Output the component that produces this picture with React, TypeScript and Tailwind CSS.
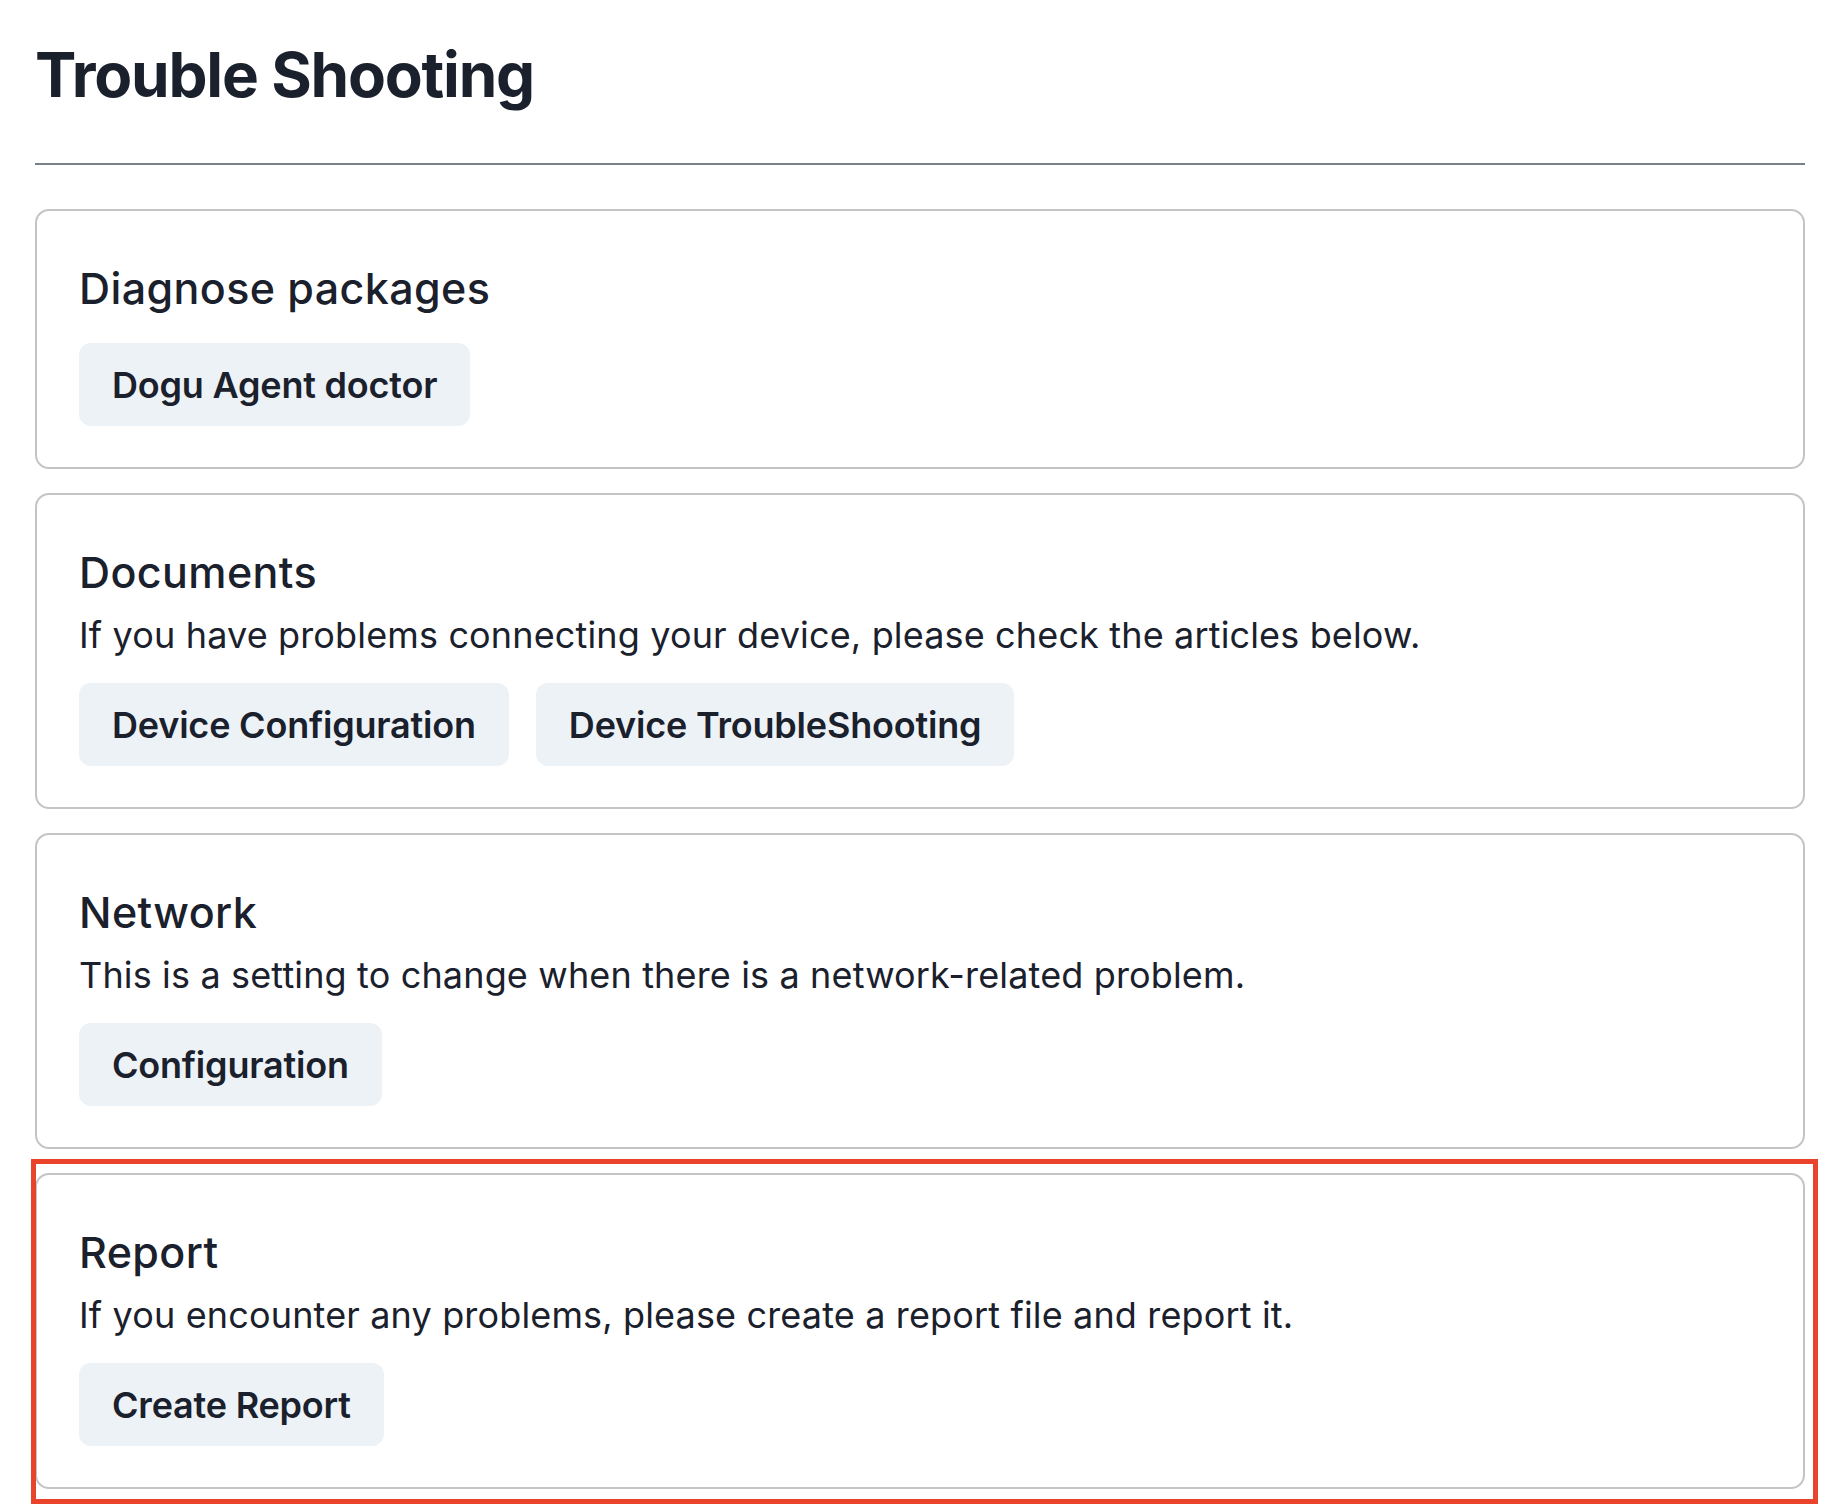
import React from "react";

const font = { fontFamily: "Inter, 'Noto Sans', sans-serif" };

function Btn({ children }: { children: React.ReactNode }) {
  return (
    <button className="h-[83px] px-[33px] rounded-[12px] bg-[#edf2f7] text-[#1a202c] text-[36px] tracking-[-0.2px] font-semibold leading-none">
      {children}
    </button>
  );
}

function Card({
  title,
  desc,
  children,
}: {
  title: string;
  desc?: string;
  children: React.ReactNode;
}) {
  return (
    <div className="border-2 border-[#c4c4c4] rounded-[14px] px-[42px] pt-[50px] pb-[41px]">
      <h2 className="text-[43px] leading-[54px] tracking-[0.4px] font-medium text-[#1a202c]">{title}</h2>
      {desc && (
        <p className="mt-[12px] text-[36px] leading-[48px] tracking-[0.15px] text-[#1a202c]">{desc}</p>
      )}
      <div className={(desc ? "mt-[24px]" : "mt-[28px]") + " flex gap-[27px]"}>{children}</div>
    </div>
  );
}

export default function App() {
  return (
    <div className="w-[1826px] h-[1504px] bg-white overflow-hidden" style={font}>
      <div className="pl-[35px] pt-[38px] w-[1805px]">
        <h1 className="text-[62px] leading-[74px] tracking-[-1.2px] font-bold text-[#1a202c]">Trouble Shooting</h1>
        <div className="mt-[51px] h-[2px] bg-[#7b7f86]" />
        <div className="mt-[44px] flex flex-col gap-[24px]">
          <Card title="Diagnose packages">
            <Btn>Dogu Agent doctor</Btn>
          </Card>
          <Card
            title="Documents"
            desc="If you have problems connecting your device, please check the articles below."
          >
            <Btn>Device Configuration</Btn>
            <Btn>Device TroubleShooting</Btn>
          </Card>
          <Card
            title="Network"
            desc="This is a setting to change when there is a network-related problem."
          >
            <Btn>Configuration</Btn>
          </Card>
          <div className="relative">
            <Card
              title="Report"
              desc="If you encounter any problems, please create a report file and report it."
            >
              <Btn>Create Report</Btn>
            </Card>
            <div className="absolute left-[-4px] top-[-14px] right-[-13px] bottom-[-15px] border-[5px] border-[#e9432b] pointer-events-none" />
          </div>
        </div>
      </div>
    </div>
  );
}
